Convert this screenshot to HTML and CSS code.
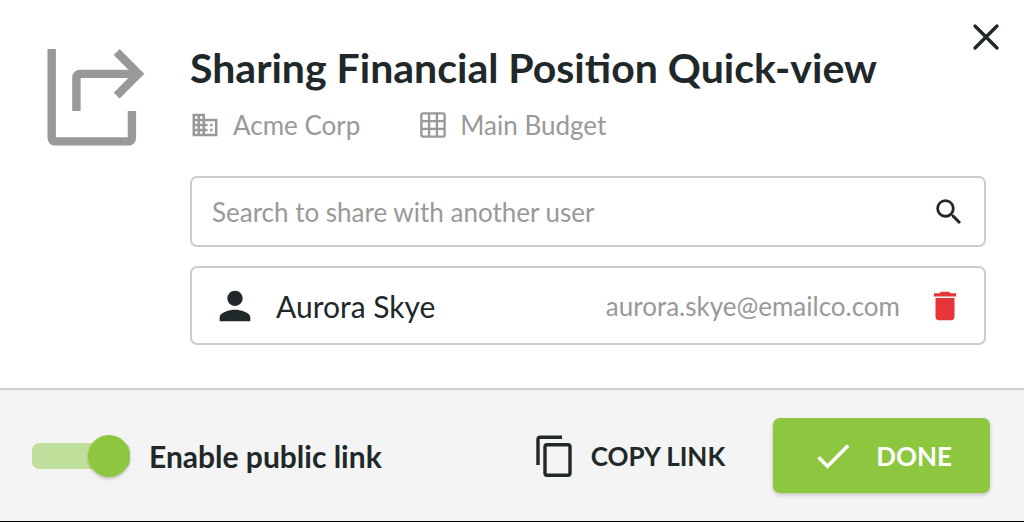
FILE: index.html
```html
<!DOCTYPE html>
<html lang="en">
<head>
<meta charset="utf-8">
<meta name="viewport" content="width=device-width, initial-scale=1">
<title>Sharing Financial Position Quick-view</title>
<link rel="stylesheet" href="styles.css">
</head>
<body>
<main class="dialog">
  <button class="icon-button close" type="button" aria-label="Close">
    <svg width="28" height="28" viewBox="0 0 28 28" fill="none" stroke="currentColor" stroke-width="3.4" stroke-linecap="round"><path d="M3 3L25 25M25 3L3 25"/></svg>
  </button>
  <section class="content">
    <svg class="share-icon" width="98" height="98" viewBox="0 0 98 98" fill="none" stroke="currentColor" stroke-width="8.4"><path d="M4.7 0V88.5Q4.7 92.4 8.6 92.4H81Q84.9 92.4 84.9 88.5V62"/><path d="M29.4 62V28.7Q29.4 24.9 33.2 24.9H90"/><path d="M69.7 3L91.4 24.8L69.7 46.6"/></svg>
    <div class="details">
      <h1 class="title">Sharing Financial Position Quick-view</h1>
      <div class="meta">
        <span class="meta-item">
          <svg width="30" height="30" viewBox="0 0 24 24" fill="currentColor"><path d="M12 7V3H2v18h20V7H12zM6 19H4v-2h2v2zm0-4H4v-2h2v2zm0-4H4V9h2v2zm0-4H4V5h2v2zm4 12H8v-2h2v2zm0-4H8v-2h2v2zm0-4H8V9h2v2zm0-4H8V5h2v2zm10 12h-8v-2h2v-2h-2v-2h2v-2h-2V9h8v10zm-2-8h-2v2h2v-2zm0 4h-2v2h2v-2z"/></svg>
          Acme Corp
        </span>
        <span class="meta-item">
          <svg width="28" height="28" viewBox="1 1 28 28" fill="none" stroke="currentColor" stroke-width="2.4"><rect x="3.4" y="3.4" width="23.2" height="23.2" rx="1.6"/><path d="M11.1 3.4v23.2M18.9 3.4v23.2M3.4 11.1h23.2M3.4 18.9h23.2"/></svg>
          Main Budget
        </span>
      </div>
      <form class="box search" role="search">
        <input class="search-input" type="text" aria-label="Search to share with another user" placeholder="Search to share with another user">
        <button class="icon-button" type="submit" aria-label="Search">
          <svg width="34" height="34" viewBox="0 0 24 24" fill="currentColor"><path d="M15.5 14h-.79l-.28-.27A6.47 6.47 0 0 0 16 9.500 6.500 6.500 0 1 0 9.500 16c1.610 0 3.090-.59 4.230-1.570l.27.28v.79l5 4.990L20.490 19l-4.990-5zm-6 0C7.010 14 5 11.990 5 9.500S7.010 5 9.500 5 14 7.010 14 9.500 11.990 14 9.500 14z"/></svg>
        </button>
      </form>
      <div class="box user">
        <svg width="46" height="46" viewBox="0 0 24 24" fill="currentColor"><path d="M12 12c2.210 0 4-1.790 4-4s-1.790-4-4-4-4 1.790-4 4 1.790 4 4 4zm0 2c-2.670 0-8 1.340-8 4v2h16v-2c0-2.660-5.330-4-8-4z"/></svg>
        <span class="user-name">Aurora Skye</span>
        <span class="user-email">aurora.skye@emailco.com</span>
        <button class="icon-button delete" type="button" aria-label="Remove Aurora Skye">
          <svg width="38" height="38" viewBox="0 0 24 24" fill="currentColor"><path d="M6 19c0 1.100.9 2 2 2h8c1.100 0 2-.9 2-2V7H6v12zM19 4h-3.500l-1-1h-5l-1 1H5v2h14V4z"/></svg>
        </button>
      </div>
    </div>
  </section>
  <footer class="footer">
    <label class="switch">
      <input class="switch-input" type="checkbox" role="switch" checked>
      Enable public link
    </label>
    <button class="copy" type="button">
      <svg width="38" height="42" viewBox="0 0 38 42" fill="none" stroke="currentColor" stroke-width="3.4"><path d="M3 30V4.500Q3 2.300 5.200 2.300H27"/><rect x="10" y="9.800" width="25" height="30.400" rx="2.200"/></svg>
      COPY LINK
    </button>
    <button class="done" type="button">
      <svg width="44" height="44" viewBox="0 0 24 24" fill="currentColor"><path d="M9 16.170L4.830 12l-1.420 1.410L9 19 21 7l-1.410-1.410z"/></svg>
      DONE
    </button>
  </footer>
</main>
</body>
</html>
```
FILE: styles.css
```css
* {
  box-sizing: border-box;
}

body {
  margin: 0;
  font-family: Lato, "Liberation Sans", sans-serif;
  color: #20282a;
  background: #fff;
}

button,
input {
  font: inherit;
  color: inherit;
}

svg {
  display: block;
  flex: none;
}

.dialog {
  position: relative;
  display: flex;
  flex-direction: column;
  min-height: 100vh;
  border-bottom: 1px solid #000;
}

.icon-button {
  display: block;
  padding: 0;
  border: 0;
  background: none;
  cursor: pointer;
}

.close {
  position: absolute;
  top: 23px;
  right: 24px;
}

.content {
  display: flex;
  flex: 1;
  gap: 45px;
  padding: 44px 38px 43px 47px;
}

.share-icon {
  margin-top: 5px;
  color: #999;
}

.details {
  flex: 1;
  min-width: 0;
}

.title {
  margin: 0;
  font-size: 41px;
  font-weight: 700;
  line-height: 48px;
}

.meta {
  display: flex;
  gap: 59px;
  margin: 14px 0 32px;
  font-size: 26px;
  line-height: 38px;
  color: #999;
}

.meta-item {
  display: flex;
  align-items: center;
  gap: 13px;
}

.box {
  display: flex;
  align-items: center;
  border: 2px solid #ccc;
  border-radius: 7px;
}

.search {
  height: 71px;
  margin-bottom: 19px;
  padding: 0 18px 0 20px;
}

.search-input {
  flex: 1;
  min-width: 0;
  padding: 0;
  border: 0;
  outline: 0;
  background: none;
  font-size: 26px;
}

.search-input::placeholder {
  color: #999;
  opacity: 1;
}

.user {
  height: 79px;
  padding: 0 20px;
}

.user-name {
  margin-left: 18px;
  font-size: 30px;
}

.user-email {
  margin: 0 26px 0 auto;
  font-size: 26px;
  color: #999;
}

.delete {
  color: #e53539;
}

.footer {
  display: flex;
  align-items: center;
  padding: 28px 34px 28px 32px;
  border-top: 2px solid #ccc;
  background: #f4f4f4;
}

.switch {
  display: flex;
  align-items: center;
  gap: 19px;
  margin-right: auto;
  font-size: 30px;
  font-weight: 700;
}

.switch-input {
  display: flex;
  align-items: center;
  appearance: none;
  width: 98px;
  height: 26px;
  margin: 0;
  border-radius: 7px;
  background: #c0df9a;
}

.switch-input::before {
  content: "";
  width: 42px;
  height: 42px;
  border-radius: 50%;
  background: #8dc63f;
  box-shadow: 0 2px 3px rgba(0, 0, 0, 0.2);
}

.switch-input:checked::before {
  margin-left: auto;
}

.copy,
.done {
  display: flex;
  align-items: center;
  border: 0;
  font-size: 26px;
  font-weight: 700;
  cursor: pointer;
}

.copy {
  gap: 18px;
  margin-right: 48px;
  padding: 0;
  background: none;
}

.done {
  gap: 21px;
  height: 75px;
  padding: 0 38px;
  border-radius: 7px;
  color: #fff;
  background: #8dc63f;
  box-shadow: 0 2px 4px rgba(0, 0, 0, 0.2);
}
```
